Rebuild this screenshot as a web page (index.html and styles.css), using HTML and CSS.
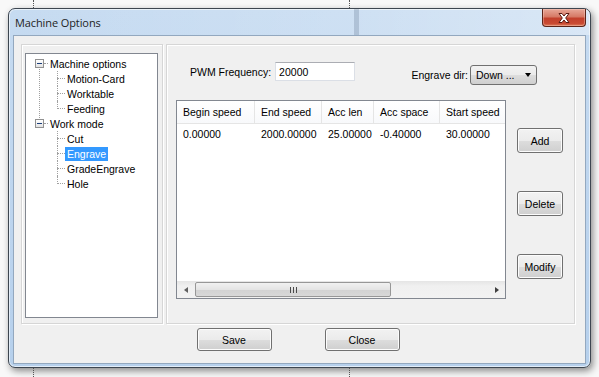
FILE: index.html
```html
<!DOCTYPE html>
<html lang="en">
<head>
  <meta charset="UTF-8">
  <title>Machine Options</title>
  <link rel="stylesheet" href="styles.css">
</head>
<body>
  <div class="desktop">
    <!-- bits of the screen behind the dialog -->
    <div class="bg-dots dots-a-top"></div>
    <div class="bg-dots dots-a-bottom"></div>
    <div class="bg-dots dots-b-top"></div>
    <div class="bg-dots dots-b-bottom"></div>
    <div class="bg-band"></div>

    <div class="window">
      <div class="titlebar">
        <span class="title">Machine Options</span>
        <button class="close-btn" title="Close">
          <svg width="16" height="12" viewBox="0 0 16 12">
            <path d="M3 1.5 L6 1.5 L8 4 L10 1.5 L13 1.5 L9.7 6 L13 10.5 L10 10.5 L8 8 L6 10.5 L3 10.5 L6.3 6 Z" fill="#fff" stroke="#5a1a12" stroke-width="1" stroke-linejoin="round"/>
          </svg>
        </button>
      </div>

      <div class="client">
        <div class="panels">
          <div class="panel panel-left">
            <div class="tree">
              <ul class="roots">
                <li>
                  <div class="node"><span class="toggle"></span><span class="hline hline-root"></span><span class="label">Machine options</span></div>
                  <ul class="children">
                    <li><div class="node"><span class="hline"></span><span class="label">Motion-Card</span></div></li>
                    <li><div class="node"><span class="hline"></span><span class="label">Worktable</span></div></li>
                    <li><div class="node"><span class="hline"></span><span class="label">Feeding</span></div></li>
                  </ul>
                </li>
                <li>
                  <div class="node"><span class="toggle"></span><span class="hline hline-root"></span><span class="label">Work mode</span></div>
                  <ul class="children">
                    <li><div class="node"><span class="hline"></span><span class="label">Cut</span></div></li>
                    <li><div class="node"><span class="hline"></span><span class="label selected">Engrave</span></div></li>
                    <li><div class="node"><span class="hline"></span><span class="label">GradeEngrave</span></div></li>
                    <li><div class="node"><span class="hline"></span><span class="label">Hole</span></div></li>
                  </ul>
                </li>
              </ul>
            </div>
          </div>

          <div class="panel panel-right">
            <div class="top-row">
              <div class="field">
                <span>PWM Frequency:</span>
                <input type="text" class="edit" value="20000">
              </div>
              <div class="field field-dir">
                <span>Engrave dir:</span>
                <div class="combo"><span>Down ...</span><span class="combo-arrow"></span></div>
              </div>
            </div>

            <div class="body-row">
              <div class="listview">
                <div class="list-view-area">
                  <div class="lv-row lv-header">
                    <div class="cell c1">Begin speed</div>
                    <div class="cell c2">End speed</div>
                    <div class="cell c3">Acc len</div>
                    <div class="cell c4">Acc space</div>
                    <div class="cell c5">Start speed</div>
                  </div>
                  <div class="lv-row">
                    <div class="cell c1">0.00000</div>
                    <div class="cell c2">2000.00000</div>
                    <div class="cell c3">25.00000</div>
                    <div class="cell c4">-0.40000</div>
                    <div class="cell c5">30.00000</div>
                  </div>
                </div>
                <div class="hscroll">
                  <div class="sb-btn"><span class="arrow-left"></span></div>
                  <div class="sb-track">
                    <div class="sb-thumb"><span class="grip"></span></div>
                  </div>
                  <div class="sb-btn"><span class="arrow-right"></span></div>
                </div>
              </div>

              <div class="side-buttons">
                <button class="btn btn-small">Add</button>
                <button class="btn btn-small">Delete</button>
                <button class="btn btn-small">Modify</button>
              </div>
            </div>
          </div>
        </div>

        <div class="footer">
          <button class="btn btn-wide">Save</button>
          <button class="btn btn-wide">Close</button>
        </div>
      </div>
    </div>
  </div>
</body>
</html>
```

FILE: styles.css
```css
* {
  box-sizing: border-box;
}
body {
  margin: 0;
  font-family: "Liberation Sans", Arial, sans-serif;
  font-size: 10.5px;
  color: #000;
  background: #f8f8f8;
}
.desktop {
  position: relative;
  width: 599px;
  height: 377px;
  overflow: hidden;
  padding: 8px 0 0 8px;
  background: #f8f8f8;
}

/* background leftovers */
.bg-dots {
  position: absolute;
  width: 1px;
  border-left: 1px dotted #555;
}
.dots-a-top { left: 33px; top: 0; height: 8px; }
.dots-a-bottom { left: 33px; top: 368px; height: 9px; }
.dots-b-top { left: 349px; top: 0; height: 8px; }
.dots-b-bottom { left: 349px; top: 368px; height: 9px; }
.bg-band {
  position: absolute;
  left: 354px;
  top: 9px;
  width: 5px;
  height: 26px;
  background: rgba(40, 60, 90, 0.18);
}

/* window frame */
.window {
  width: 583px;
  height: 360px;
  display: flex;
  flex-direction: column;
  border: 1px solid #3d4650;
  border-radius: 7px;
  background: linear-gradient(to bottom, #c6dbf1, #b6d0ec);
  box-shadow: inset 0 0 0 1px rgba(255, 255, 255, 0.6), 2px 3px 7px rgba(0, 0, 0, 0.45);
}
.titlebar {
  height: 26px;
  display: flex;
  align-items: center;
  padding-left: 6px;
  border-radius: 6px 6px 0 0;
  background: linear-gradient(to right, rgba(255,255,255,0) 0%, rgba(255,255,255,0.15) 60%, rgba(255,255,255,0.35) 100%);
}
.title {
  font-family: "Open Sans", "Noto Sans", sans-serif;
  font-size: 11px;
  letter-spacing: -0.1px;
  color: #1e1e1e;
  padding-top: 1px;
}
.close-btn {
  margin-left: auto;
  margin-right: 4px;
  align-self: flex-start;
  width: 44px;
  height: 18px;
  padding: 0;
  display: flex;
  align-items: center;
  justify-content: center;
  border: 1px solid #5c2418;
  border-top: none;
  border-radius: 0 0 4px 4px;
  background: linear-gradient(to bottom, #e8a899 0%, #d67a66 45%, #c2402c 55%, #c94a32 85%, #de7d5c 100%);
  box-shadow: inset 0 0 0 1px rgba(255, 220, 210, 0.35);
}

.client {
  flex: 1;
  margin: 0 4px 3px 4px;
  border: 1px solid #93a8bf;
  background: #f0f0f0;
  padding: 8px 10px 0 7px;
  display: flex;
  flex-direction: column;
}
.panels {
  height: 280px;
  display: flex;
  gap: 3px;
}
.panel {
  border: 1px solid #d6d6d6;
  box-shadow: inset 1px 1px 0 #fff, 1px 1px 0 #fff;
}

/* tree */
.panel-left {
  width: 142px;
  display: flex;
  flex-direction: column;
  padding: 8px 4px 5px 3px;
}
.tree {
  flex: 1;
  background: #fff;
  border: 1px solid #828790;
  padding: 2px 0 0 9px;
}
.tree ul {
  list-style: none;
  margin: 0;
  padding: 0;
}
.tree li {
  position: relative;
}
.roots > li::before {
  content: "";
  position: absolute;
  left: 4px;
  top: 7px;
  bottom: -8px;
  border-left: 1px dotted #a0a0a0;
}
.roots > li:last-child::before {
  display: none;
}
.children {
  margin-left: 22px !important;
}
.children > li::before {
  content: "";
  position: absolute;
  left: 0;
  top: 0;
  bottom: 0;
  border-left: 1px dotted #a0a0a0;
}
.children > li:last-child::before {
  bottom: 7px;
}
.node {
  position: relative;
  height: 15px;
  display: flex;
  align-items: center;
}
.toggle {
  position: relative;
  z-index: 1;
  width: 9px;
  height: 9px;
  border: 1px solid #919191;
  background: linear-gradient(to bottom, #fff, #e2e2e2);
}
.toggle::after {
  content: "";
  position: absolute;
  left: 1px;
  top: 3px;
  width: 5px;
  height: 1px;
  background: #1c3f7a;
}
.hline {
  width: 8px;
  border-top: 1px dotted #a0a0a0;
}
.hline-root {
  width: 4px;
}
.label {
  line-height: 14px;
  padding: 0 2px;
  white-space: nowrap;
}
.label.selected {
  background: #3399ff;
  color: #fff;
}

/* right side */
.panel-right {
  flex: 1;
  padding: 17px 0 0 0;
}
.top-row {
  height: 38px;
  display: flex;
  align-items: flex-start;
}
.field {
  display: flex;
  align-items: center;
  margin-left: 23px;
  white-space: nowrap;
}
.edit {
  margin-left: 4px;
  width: 80px;
  height: 19px;
  padding: 0 3px;
  font-family: "Liberation Sans", Arial, sans-serif;
  font-size: 10.5px;
  border: 1px solid #dbdfe6;
  border-top-color: #abadb3;
  background: #fff;
}
.field-dir {
  margin-left: auto;
  margin-right: 37px;
  margin-top: 3px;
}
.combo {
  margin-left: 2px;
  width: 67px;
  height: 20px;
  display: flex;
  align-items: center;
  justify-content: space-between;
  padding: 0 5px 0 5px;
  border: 1px solid #707070;
  border-radius: 3px;
  background: linear-gradient(to bottom, #f2f2f2 0%, #ebebeb 50%, #dddddd 51%, #cfcfcf 100%);
}
.combo-arrow {
  width: 0;
  height: 0;
  border-left: 3.5px solid transparent;
  border-right: 3.5px solid transparent;
  border-top: 4px solid #000;
}
.body-row {
  display: flex;
  margin-left: 9px;
}
.listview {
  width: 330px;
  height: 199px;
  border: 1px solid #828790;
  background: #fff;
  display: flex;
  flex-direction: column;
}
.list-view-area {
  flex: 1;
  overflow: hidden;
}
.lv-row {
  display: flex;
  height: 17px;
  align-items: center;
  white-space: nowrap;
}
.lv-header {
  height: 23px;
  border-bottom: 1px solid #e5e5e5;
  background: linear-gradient(to bottom, #fff, #f8f9fb);
}
.lv-header .cell {
  height: 100%;
  display: flex;
  align-items: center;
  border-right: 1px solid #e5e5e5;
}
.cell {
  flex: none;
  padding-left: 6px;
  overflow: hidden;
}
.c1 { width: 78px; }
.c2 { width: 67px; }
.c3 { width: 52px; }
.c4 { width: 66px; }
.c5 { width: 80px; }
.lv-header + .lv-row {
  margin-top: 1px;
}

.hscroll {
  height: 17px;
  display: flex;
  background: linear-gradient(to bottom, #e5e5e5, #f0f0f0 30%, #f2f2f2);
}
.sb-btn {
  width: 17px;
  display: flex;
  align-items: center;
  justify-content: center;
}
.arrow-left {
  width: 0;
  height: 0;
  border-top: 3.5px solid transparent;
  border-bottom: 3.5px solid transparent;
  border-right: 4px solid #606060;
}
.arrow-right {
  width: 0;
  height: 0;
  border-top: 3.5px solid transparent;
  border-bottom: 3.5px solid transparent;
  border-left: 4px solid #404040;
}
.sb-track {
  flex: 1;
  padding: 1px 0;
}
.sb-thumb {
  width: 196px;
  height: 100%;
  margin-left: 1px;
  border: 1px solid #979797;
  border-radius: 2px;
  background: linear-gradient(to bottom, #f1f1f1, #e4e4e4 50%, #d2d2d2 51%, #d8d8d8);
  display: flex;
  align-items: center;
  justify-content: center;
}
.grip {
  width: 7px;
  height: 6px;
  background: repeating-linear-gradient(to right, #4a4a4a 0 1px, transparent 1px 3px);
}

.side-buttons {
  margin-left: 11px;
  padding-top: 28px;
  display: flex;
  flex-direction: column;
  gap: 38px;
}
.btn {
  font-family: "Liberation Sans", Arial, sans-serif;
  font-size: 10.5px;
  color: #000;
  padding: 0;
  border: 1px solid #707070;
  border-radius: 3px;
  background: linear-gradient(to bottom, #f2f2f2 0%, #ebebeb 50%, #dddddd 51%, #cfcfcf 100%);
  box-shadow: inset 0 0 0 1px #fcfcfc;
}
.btn-small {
  width: 46px;
  height: 25px;
}
.footer {
  display: flex;
  justify-content: center;
  gap: 53px;
  padding-top: 4px;
}
.btn-wide {
  width: 75px;
  height: 23px;
}
```
